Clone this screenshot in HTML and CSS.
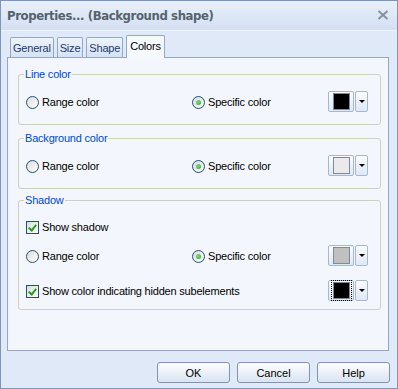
FILE: index.html
```html
<!DOCTYPE html>
<html>
<head>
    <meta charset="UTF-8">
    <title>Properties... (Background shape)</title>
    <link rel="stylesheet" href="styles.css">
</head>
<body>
<div class="window">
    <div class="titlebar">
        <span class="title">Properties... (Background shape)</span>
        <svg class="close" width="12" height="10" viewBox="0 0 12 10">
            <path d="M1.5 1 L10.5 9 M10.5 1 L1.5 9" stroke="#8491a5" stroke-width="2" fill="none"/>
        </svg>
    </div>

    <div class="tabs">
        <div class="tab">General</div>
        <div class="tab">Size</div>
        <div class="tab">Shape</div>
        <div class="tab active">Colors</div>
    </div>

    <div class="panel">
        <fieldset class="group first">
            <legend>Line color</legend>
            <div class="row">
                <label class="opt range"><span class="radio"></span>Range color</label>
                <label class="opt"><span class="radio on"></span>Specific color</label>
                <div class="picker">
                    <span class="swatch-btn"><span class="swatch black"></span></span>
                    <span class="arrow-btn"><span class="arrow"></span></span>
                </div>
            </div>
        </fieldset>

        <fieldset class="group second">
            <legend>Background color</legend>
            <div class="row">
                <label class="opt range"><span class="radio"></span>Range color</label>
                <label class="opt"><span class="radio on"></span>Specific color</label>
                <div class="picker">
                    <span class="swatch-btn"><span class="swatch light"></span></span>
                    <span class="arrow-btn"><span class="arrow"></span></span>
                </div>
            </div>
        </fieldset>

        <fieldset class="group third">
            <legend>Shadow</legend>
            <div class="row shadow-row">
                <label class="opt"><span class="check"></span>Show shadow</label>
            </div>
            <div class="row range-row">
                <label class="opt range"><span class="radio"></span>Range color</label>
                <label class="opt"><span class="radio on"></span>Specific color</label>
                <div class="picker">
                    <span class="swatch-btn"><span class="swatch gray"></span></span>
                    <span class="arrow-btn"><span class="arrow"></span></span>
                </div>
            </div>
            <div class="row hidden-row">
                <label class="opt"><span class="check"></span>Show color indicating hidden subelements</label>
                <div class="picker">
                    <span class="swatch-btn focus"><span class="swatch black"></span></span>
                    <span class="arrow-btn"><span class="arrow"></span></span>
                </div>
            </div>
        </fieldset>
    </div>

    <div class="buttons">
        <button>OK</button>
        <button>Cancel</button>
        <button>Help</button>
    </div>
</div>
</body>
</html>
```

FILE: styles.css
```css
body {
    margin: 0;
    font-family: "Liberation Sans", Arial, sans-serif;
    font-size: 11px;
    letter-spacing: -0.2px;
    color: #000;
}
.window {
    width: 398px;
    height: 389px;
    box-sizing: border-box;
    border: 1px solid #7d95b9;
    background: #dfe9f7;
    display: flex;
    flex-direction: column;
}

/* title bar */
.titlebar {
    height: 28px;
    display: flex;
    align-items: center;
    justify-content: space-between;
    padding: 0 8px 1px 6px;
    background: linear-gradient(#e8eff9, #d3e0f2);
    border-bottom: 1px solid #eef3fb;
}
.title {
    font-family: "Liberation Sans Narrow", "DejaVu Sans Condensed", "Liberation Sans", sans-serif;
    font-weight: bold;
    font-size: 13px;
    letter-spacing: -0.4px;
    color: #55626f;
}
.close {
    display: block;
}

/* tabs */
.tabs {
    height: 22px;
    margin-top: 4px;
    padding-left: 9px;
    display: flex;
    align-items: flex-end;
    gap: 3px;
}
.tab {
    height: 19px;
    line-height: 20px;
    padding: 0 2px;
    border: 1px solid #94a8c6;
    border-bottom: none;
    border-radius: 2px 2px 0 0;
    background: linear-gradient(#eef3fb, #d6e2f3);
    color: #1d3b6c;
}
.tab.active {
    height: 22px;
    line-height: 21px;
    margin-bottom: -1px;
    position: relative;
    z-index: 1;
    background: #f6f9fd;
    color: #000;
    padding: 0 3px;
}

.panel {
    width: 382px;
    height: 294px;
    box-sizing: border-box;
    margin-left: 6px;
    padding: 10px 7px 0 10px;
    border: 1px solid #94a8c6;
    background: #f3f7fd;
}

/* group boxes */
.group {
    margin: 0;
    padding: 0 12px 12px 7px;
    border: 1px solid #d0d0bf;
    border-radius: 3px;
    min-width: 0;
}
.group legend {
    padding: 0 1px;
    margin-left: -2px;
    line-height: 13px;
    color: #0046d5;
}
.group.second {
    margin-top: 7px;
}
.group.third {
    margin-top: 5px;
    padding-bottom: 8px;
}
.row {
    height: 22px;
    margin-top: 9px;
    display: flex;
    align-items: center;
}
.shadow-row {
    margin-top: 8px;
}
.range-row {
    margin-top: 7px;
}
.hidden-row {
    margin-top: 13px;
}
.opt {
    display: flex;
    align-items: center;
    gap: 3px;
    padding-top: 2px;
}
.opt.range {
    width: 166px;
}

/* radio and check */
.radio {
    width: 11px;
    height: 11px;
    border: 1px solid #1c5180;
    border-radius: 50%;
    background: linear-gradient(135deg, #dcdcd6, #fff);
    position: relative;
}
.radio.on::after {
    content: "";
    position: absolute;
    left: 3px;
    top: 3px;
    width: 5px;
    height: 5px;
    border-radius: 50%;
    background: radial-gradient(circle at 40% 40%, #7fe27f, #21a121);
}
.check {
    width: 11px;
    height: 11px;
    border: 1px solid #1c5180;
    background: linear-gradient(135deg, #dcdcd6, #fff) ;
    position: relative;
}
.check::after {
    content: "";
    position: absolute;
    left: 3px;
    top: 1px;
    width: 3px;
    height: 6px;
    border: solid #21a121;
    border-width: 0 2px 2px 0;
    transform: rotate(40deg);
}

/* color picker */
.picker {
    margin-left: auto;
    display: flex;
    gap: 1px;
    height: 21px;
}
.swatch-btn {
    width: 24px;
    height: 19px;
    border: 1px solid #a3b8d6;
    border-radius: 2px;
    background: linear-gradient(#fbfcfe, #dfe8f5);
    display: flex;
    align-items: center;
    justify-content: center;
}
.swatch-btn.focus .swatch {
    outline: 1px dotted #000;
    outline-offset: 1px;
}
.swatch {
    width: 15px;
    height: 15px;
    border: 1px solid #7f8a99;
}
.swatch.black {
    background: #000;
}
.swatch.light {
    background: #ebe9ee;
}
.swatch.gray {
    background: #c0c0c0;
}
.arrow-btn {
    width: 11px;
    height: 19px;
    border: 1px solid #a3b8d6;
    border-radius: 2px;
    background: linear-gradient(#fbfcfe, #dfe8f5);
    display: flex;
    align-items: center;
    justify-content: center;
}
.arrow {
    width: 0;
    height: 0;
    border-left: 3px solid transparent;
    border-right: 3px solid transparent;
    border-top: 3px solid #000;
}

/* bottom buttons */
.buttons {
    margin-top: 11px;
    padding-right: 7px;
    display: flex;
    justify-content: flex-end;
    gap: 7px;
}
.buttons button {
    width: 73px;
    height: 21px;
    padding: 0;
    font: inherit;
    border: 1px solid #8194b2;
    border-radius: 3px;
    background: linear-gradient(#fdfeff, #d9e3f2);
    color: #000;
}
```
